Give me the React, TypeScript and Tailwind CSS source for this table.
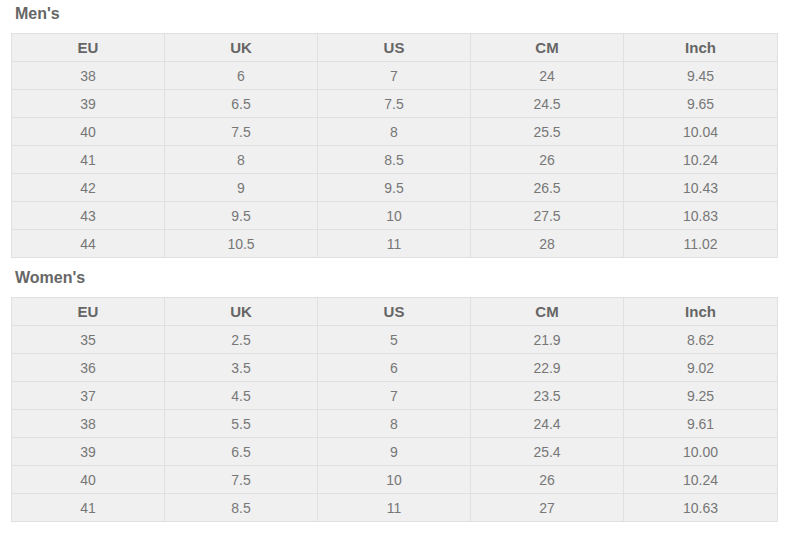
import React from "react";

const headers = ["EU", "UK", "US", "CM", "Inch"];
const men = [
  ["38", "6", "7", "24", "9.45"],
  ["39", "6.5", "7.5", "24.5", "9.65"],
  ["40", "7.5", "8", "25.5", "10.04"],
  ["41", "8", "8.5", "26", "10.24"],
  ["42", "9", "9.5", "26.5", "10.43"],
  ["43", "9.5", "10", "27.5", "10.83"],
  ["44", "10.5", "11", "28", "11.02"],
];
const women = [
  ["35", "2.5", "5", "21.9", "8.62"],
  ["36", "3.5", "6", "22.9", "9.02"],
  ["37", "4.5", "7", "23.5", "9.25"],
  ["38", "5.5", "8", "24.4", "9.61"],
  ["39", "6.5", "9", "25.4", "10.00"],
  ["40", "7.5", "10", "26", "10.24"],
  ["41", "8.5", "11", "27", "10.63"],
];

function SizeTable({ rows }: { rows: string[][] }) {
  return (
    <table className="w-[766px] border-collapse bg-[#f0f0f0] table-fixed">
      <colgroup>
        <col className="w-[153px]" />
        <col className="w-[153px]" />
        <col className="w-[153px]" />
        <col className="w-[153px]" />
        <col className="w-[154px]" />
      </colgroup>
      <thead>
        <tr className="h-[28px]">
          {headers.map((h) => (
            <th
              key={h}
              className="border border-[#e0e0e0] p-0 text-center text-[15px] font-bold text-[#666] leading-[18px]"
            >
              {h}
            </th>
          ))}
        </tr>
      </thead>
      <tbody>
        {rows.map((r, i) => (
          <tr key={i} className="h-[28px]">
            {r.map((c, j) => (
              <td
                key={j}
                className="border border-[#e0e0e0] p-0 text-center text-[14px] text-[#777] leading-[18px]"
              >
                {c}
              </td>
            ))}
          </tr>
        ))}
      </tbody>
    </table>
  );
}

export default function App() {
  return (
    <div
      className="w-[788px] h-[535px] bg-white pl-[11px]"
      style={{ fontFamily: '"Liberation Sans", Arial, sans-serif' }}
    >
      <div className="h-[33px] pt-[5px] pl-[4px] text-[16px] font-bold text-[#666] leading-[18px]">
        Men's
      </div>
      <SizeTable rows={men} />
      <div className="h-[39px] pt-[11px] pl-[4px] text-[16px] font-bold text-[#666] leading-[18px]">
        Women's
      </div>
      <SizeTable rows={women} />
    </div>
  );
}
